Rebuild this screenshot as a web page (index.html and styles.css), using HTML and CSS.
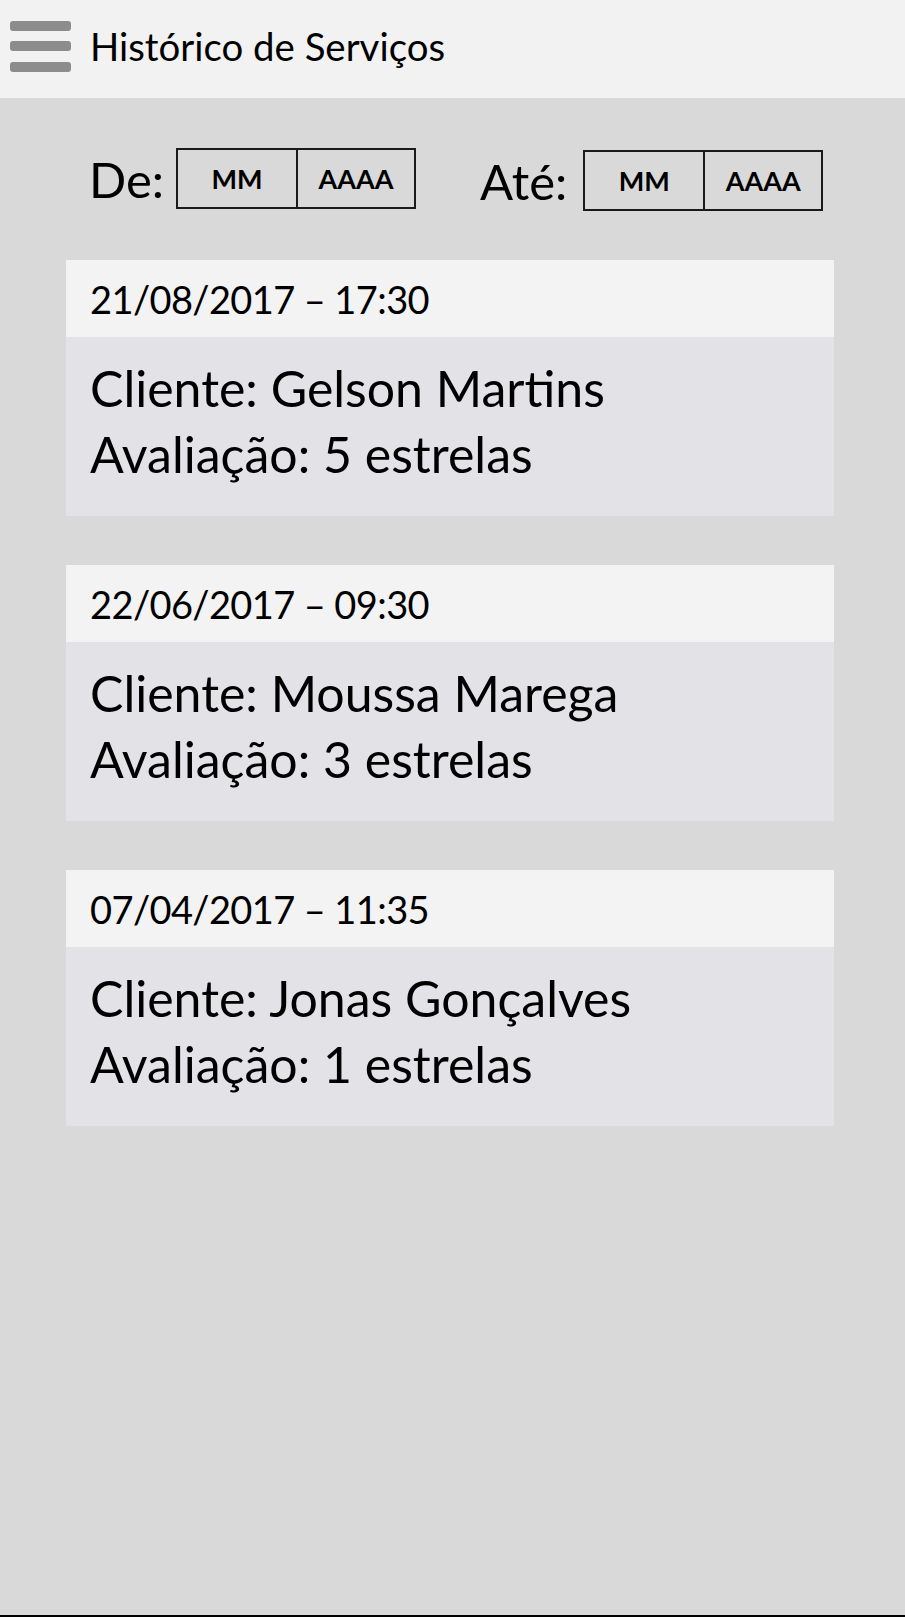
FILE: index.html
```html
<!DOCTYPE html>
<html lang="pt">
<head>
<meta charset="utf-8">
<title>Histórico de Serviços</title>
<link rel="stylesheet" href="styles.css">
</head>
<body>
<div class="page">
  <header class="topbar">
    <svg class="menu-icon" width="61" height="52" viewBox="0 0 61 52" aria-hidden="true">
      <rect x="0" y="0" width="61" height="10" rx="3" fill="#8c8c8c"/>
      <rect x="0" y="20" width="61" height="10" rx="3" fill="#8c8c8c"/>
      <rect x="0" y="41" width="61" height="10" rx="3" fill="#8c8c8c"/>
    </svg>
    <h1 class="title">Histórico de Serviços</h1>
  </header>

  <section class="filters">
    <div class="range range-from">
      <span class="range-label">De:</span>
      <div class="date-box">
        <span class="date-cell">MM</span>
        <span class="date-cell">AAAA</span>
      </div>
    </div>
    <div class="range range-to">
      <span class="range-label">Até:</span>
      <div class="date-box">
        <span class="date-cell">MM</span>
        <span class="date-cell">AAAA</span>
      </div>
    </div>
  </section>

  <main class="list">
    <article class="card">
      <div class="card-head">21/08/2017 – 17:30</div>
      <div class="card-body">
        <p>Cliente: Gelson Martins</p>
        <p>Avaliação: 5 estrelas</p>
      </div>
    </article>
    <article class="card">
      <div class="card-head">22/06/2017 – 09:30</div>
      <div class="card-body">
        <p>Cliente: Moussa Marega</p>
        <p>Avaliação: 3 estrelas</p>
      </div>
    </article>
    <article class="card">
      <div class="card-head">07/04/2017 – 11:35</div>
      <div class="card-body">
        <p>Cliente: Jonas Gonçalves</p>
        <p>Avaliação: 1 estrelas</p>
      </div>
    </article>
  </main>
</div>
</body>
</html>
```

FILE: styles.css
```css
* { box-sizing: border-box; }

html, body {
  margin: 0;
  padding: 0;
}

body {
  background: #d9d9d9;
  font-family: Lato, "Open Sans", "Liberation Sans", sans-serif;
  color: #000;
}

.page {
  min-height: 1617px;
  border-bottom: 2px solid #000;
}

.topbar {
  height: 98px;
  background: #f2f2f2;
  display: flex;
  align-items: flex-start;
  padding: 21px 0 0 10px;
  gap: 19px;
}

.menu-icon {
  display: block;
  flex: none;
}

.title {
  margin: 0;
  font-weight: 400;
  font-size: 38.4px;
  line-height: 50px;
}

.filters {
  display: flex;
  align-items: flex-start;
  padding: 50px 0 0 89px;
  gap: 64px;
}

.range {
  display: flex;
  align-items: center;
  gap: 12px;
}

.range-to {
  gap: 16px;
  margin-top: 2px;
}

.range-label {
  font-size: 49px;
  line-height: 60px;
}

.date-box {
  display: flex;
  border: 2px solid #1a1a1a;
  height: 61px;
}

.date-cell {
  width: 118px;
  display: flex;
  align-items: center;
  justify-content: center;
  font-weight: 700;
  font-size: 27px;
}

.date-cell + .date-cell {
  border-left: 2px solid #1a1a1a;
}

.list {
  display: flex;
  flex-direction: column;
  gap: 49px;
  padding: 49px 0 0 66px;
}

.card {
  width: 768px;
}

.card-head {
  background: #f3f3f3;
  height: 77px;
  display: flex;
  align-items: center;
  padding-left: 24px;
  font-size: 38px;
  letter-spacing: -0.6px;
}

.card-body {
  background: #e3e2e7;
  height: 179px;
  padding: 18px 0 0 24px;
  font-size: 50px;
  line-height: 66px;
}

.card-body p {
  margin: 0;
}
```
